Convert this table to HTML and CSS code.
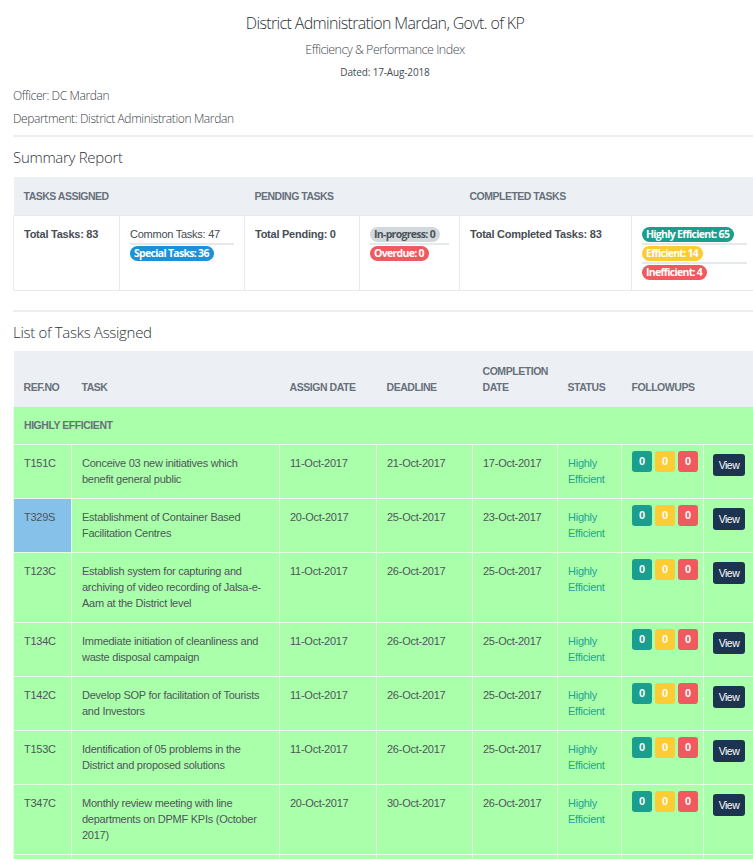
FILE: index.html
```html
<!DOCTYPE html>
<html lang="en">
<head>
<meta charset="utf-8">
<title>Efficiency &amp; Performance Index</title>
<link rel="stylesheet" href="styles.css">
</head>
<body>
<div class="page">
  <header class="report-head">
    <h1 class="title">District Administration Mardan, Govt. of KP</h1>
    <p class="subtitle">Efficiency &amp; Performance Index</p>
    <p class="dated">Dated: 17-Aug-2018</p>
  </header>
  <div class="meta">
    <p class="meta-line">Officer: DC Mardan</p>
    <p class="meta-line">Department: District Administration Mardan</p>
  </div>
  <hr class="rule">
  <h2 class="section-title section-title-first">Summary Report</h2>
  <table class="summary">
    <colgroup>
      <col class="s1"><col class="s2"><col class="s3"><col class="s4"><col class="s5"><col class="s6">
    </colgroup>
    <thead>
      <tr>
        <th colspan="2">Tasks Assigned</th>
        <th colspan="2">Pending Tasks</th>
        <th colspan="2">Completed Tasks</th>
      </tr>
    </thead>
    <tbody>
      <tr>
        <td class="strong">Total Tasks: 83</td>
        <td>
          <ul class="stack">
            <li>Common Tasks: 47</li>
            <li><span class="pill pill-blue">Special Tasks: 36</span></li>
          </ul>
        </td>
        <td class="strong">Total Pending: 0</td>
        <td>
          <ul class="stack">
            <li><span class="pill pill-gray">In-progress: 0</span></li>
            <li><span class="pill pill-red">Overdue: 0</span></li>
          </ul>
        </td>
        <td class="strong">Total Completed Tasks: 83</td>
        <td>
          <ul class="stack">
            <li><span class="pill pill-teal">Highly Efficient: 65</span></li>
            <li><span class="pill pill-yellow">Efficient: 14</span></li>
            <li><span class="pill pill-red">Inefficient: 4</span></li>
          </ul>
        </td>
      </tr>
    </tbody>
  </table>
  <hr class="rule rule-2">
  <h2 class="section-title">List of Tasks Assigned</h2>
  <table class="tasks">
    <colgroup>
      <col class="c1"><col class="c2"><col class="c3"><col class="c4"><col class="c5"><col class="c6"><col class="c7"><col class="c8">
    </colgroup>
    <thead>
      <tr>
        <th>Ref.No</th>
        <th>Task</th>
        <th>Assign Date</th>
        <th>Deadline</th>
        <th>Completion Date</th>
        <th>Status</th>
        <th>Followups</th>
        <th></th>
      </tr>
    </thead>
    <tbody>
      <tr class="group"><td colspan="8">Highly Efficient</td></tr>
      <tr>
        <td>T151C</td>
        <td>Conceive 03 new initiatives which benefit general public</td>
        <td>11-Oct-2017</td><td>21-Oct-2017</td><td>17-Oct-2017</td>
        <td class="status">Highly Efficient</td>
        <td class="follow"><span class="fb fb-teal">0</span><span class="fb fb-yellow">0</span><span class="fb fb-red">0</span></td>
        <td class="act"><button class="view">View</button></td>
      </tr>
      <tr>
        <td class="special">T329S</td>
        <td>Establishment of Container Based Facilitation Centres</td>
        <td>20-Oct-2017</td><td>25-Oct-2017</td><td>23-Oct-2017</td>
        <td class="status">Highly Efficient</td>
        <td class="follow"><span class="fb fb-teal">0</span><span class="fb fb-yellow">0</span><span class="fb fb-red">0</span></td>
        <td class="act"><button class="view">View</button></td>
      </tr>
      <tr>
        <td>T123C</td>
        <td>Establish system for capturing and archiving of video recording of Jalsa-e-Aam at the District level</td>
        <td>11-Oct-2017</td><td>26-Oct-2017</td><td>25-Oct-2017</td>
        <td class="status">Highly Efficient</td>
        <td class="follow"><span class="fb fb-teal">0</span><span class="fb fb-yellow">0</span><span class="fb fb-red">0</span></td>
        <td class="act"><button class="view">View</button></td>
      </tr>
      <tr>
        <td>T134C</td>
        <td>Immediate initiation of cleanliness and waste disposal campaign</td>
        <td>11-Oct-2017</td><td>26-Oct-2017</td><td>25-Oct-2017</td>
        <td class="status">Highly Efficient</td>
        <td class="follow"><span class="fb fb-teal">0</span><span class="fb fb-yellow">0</span><span class="fb fb-red">0</span></td>
        <td class="act"><button class="view">View</button></td>
      </tr>
      <tr>
        <td>T142C</td>
        <td>Develop SOP for facilitation of Tourists and Investors</td>
        <td>11-Oct-2017</td><td>26-Oct-2017</td><td>25-Oct-2017</td>
        <td class="status">Highly Efficient</td>
        <td class="follow"><span class="fb fb-teal">0</span><span class="fb fb-yellow">0</span><span class="fb fb-red">0</span></td>
        <td class="act"><button class="view">View</button></td>
      </tr>
      <tr>
        <td>T153C</td>
        <td>Identification of 05 problems in the District and proposed solutions</td>
        <td>11-Oct-2017</td><td>26-Oct-2017</td><td>25-Oct-2017</td>
        <td class="status">Highly Efficient</td>
        <td class="follow"><span class="fb fb-teal">0</span><span class="fb fb-yellow">0</span><span class="fb fb-red">0</span></td>
        <td class="act"><button class="view">View</button></td>
      </tr>
      <tr>
        <td>T347C</td>
        <td>Monthly review meeting with line departments on DPMF KPIs (October 2017)</td>
        <td>20-Oct-2017</td><td>30-Oct-2017</td><td>26-Oct-2017</td>
        <td class="status">Highly Efficient</td>
        <td class="follow"><span class="fb fb-teal">0</span><span class="fb fb-yellow">0</span><span class="fb fb-red">0</span></td>
        <td class="act"><button class="view">View</button></td>
      </tr>
      <tr class="filler">
        <td></td><td></td><td></td><td></td><td></td><td></td><td></td><td></td>
      </tr>
    </tbody>
  </table>
</div>
</body>
</html>
```

FILE: styles.css
```css
html, body {
  margin: 0;
  padding: 0;
  background: #ffffff;
}

body {
  font-family: "Open Sans", "Liberation Sans", sans-serif;
  color: #444b52;
}

.page {
  width: 744px;
  padding: 0 13px 40px;
}

.report-head {
  text-align: center;
  padding-top: 12px;
}

.title {
  margin: 0;
  font-weight: 300;
  font-size: 16px;
  letter-spacing: -0.65px;
  line-height: 22px;
  color: #2d3339;
}

.subtitle {
  margin: 6px 0 0;
  font-weight: 300;
  font-size: 12.5px;
  letter-spacing: -0.5px;
  line-height: 20px;
  color: #444b52;
}

.dated {
  margin: 3px 0 0;
  font-weight: 400;
  font-size: 10px;
  letter-spacing: -0.15px;
  line-height: 18px;
  color: #444b52;
}

.meta {
  margin-top: 3px;
}

.meta-line {
  margin: 0;
  font-weight: 300;
  font-size: 12px;
  letter-spacing: -0.38px;
  line-height: 23px;
  color: #3a4047;
}

.rule {
  border: 0;
  border-top: 2px solid #eceef1;
  margin: 5px 0 8px;
}

.rule-2 {
  margin: 19px 0 8px;
}

.section-title {
  margin: 0 0 7px;
  font-weight: 300;
  font-size: 15px;
  letter-spacing: -0.3px;
  line-height: 24px;
  color: #2d3339;
}

.section-title-first {
  margin-bottom: 8px;
}

/* Summary table */
.summary {
  width: 744px;
  border-collapse: collapse;
  table-layout: fixed;
  font-family: "Liberation Sans", Arial, sans-serif;
}

.s1 { width: 106px; }
.s2 { width: 125px; }
.s3 { width: 115px; }
.s4 { width: 100px; }
.s5 { width: 172px; }
.s6 { width: 126px; }

.summary th {
  background: #eceff3;
  text-align: left;
  text-transform: uppercase;
  font-size: 10.5px;
  letter-spacing: -0.5px;
  font-weight: 700;
  color: #68717b;
  height: 38px;
  padding: 0 10px;
  box-sizing: border-box;
}

.summary td {
  border: 1px solid #e8ebee;
  vertical-align: top;
  padding: 11px 10px 10px;
  height: 75px;
  box-sizing: border-box;
  font-size: 11px;
  letter-spacing: -0.25px;
  line-height: 15px;
  color: #444b52;
}

.summary td.strong {
  font-weight: 700;
  color: #474e55;
}

.stack {
  list-style: none;
  margin: 0;
  padding: 0;
}

.stack li {
  border-bottom: 2px solid #e6e9ec;
  padding-bottom: 1px;
  margin-bottom: 1px;
  line-height: 15px;
}

.stack li:last-child {
  border-bottom: 0;
  padding-bottom: 0;
  margin-bottom: 0;
}

.pill {
  display: inline-block;
  font-family: "Open Sans", sans-serif;
  font-weight: 700;
  font-size: 10.5px;
  letter-spacing: -0.7px;
  line-height: 15px;
  padding: 0 5px 0 4px;
  border-radius: 8px;
  color: #ffffff;
}

.pill-blue { background: #1e90d6; }
.pill-gray { background: #d3d8dc; color: #4b535a; }
.pill-red { background: #f05a5f; }
.pill-teal { background: #1a9e8d; }
.pill-yellow { background: #fdcb33; }

/* Task table */
.tasks {
  width: 744px;
  border-collapse: collapse;
  table-layout: fixed;
  font-family: "Liberation Sans", Arial, sans-serif;
  font-size: 11px;
  letter-spacing: -0.25px;
  color: #4e555b;
}

.c1 { width: 58px; }
.c2 { width: 208px; }
.c3 { width: 97px; }
.c4 { width: 96px; }
.c5 { width: 85px; }
.c6 { width: 64px; }
.c7 { width: 82px; }
.c8 { width: 54px; }

.tasks th {
  background: #eceff3;
  text-align: left;
  vertical-align: bottom;
  text-transform: uppercase;
  font-size: 10.5px;
  letter-spacing: -0.45px;
  font-weight: 700;
  color: #68717b;
  line-height: 16px;
  height: 56px;
  padding: 0 10px 12px;
  box-sizing: border-box;
}

.tasks td {
  background: #aaffaa;
  border: 1px solid #e6fbe6;
  vertical-align: top;
  padding: 10px 10px 11px;
  line-height: 16px;
}

.tasks tr.group td {
  font-size: 10.5px;
  letter-spacing: -0.45px;
  font-weight: 700;
  text-transform: uppercase;
  color: #68717b;
  height: 38px;
  padding: 0 10px;
  vertical-align: middle;
  box-sizing: border-box;
  border-top: 0;
}

.tasks tr.filler td {
  height: 40px;
  padding: 0;
}

.tasks td.special {
  background: #85c1e9;
}

.tasks td.status {
  color: #22a394;
}

.tasks td.follow {
  padding: 6px 6px 6px 10px;
  white-space: nowrap;
}

.fb {
  display: inline-block;
  width: 20px;
  height: 21px;
  line-height: 21px;
  text-align: center;
  border-radius: 3px;
  color: #ffffff;
  font-weight: 700;
  font-size: 11px;
  letter-spacing: 0;
  margin-right: 3px;
}

.fb-teal { background: #1a9e8d; }
.fb-yellow { background: #fdcb33; }
.fb-red { background: #f05a5f; }

.tasks td.act {
  padding: 9px 6px 9px 9px;
}

.view {
  display: block;
  width: 32px;
  height: 22px;
  padding: 0;
  border: 0;
  border-radius: 3px;
  background: #1d3450;
  color: #ffffff;
  font-family: "Liberation Sans", Arial, sans-serif;
  font-size: 10.5px;
  letter-spacing: -0.5px;
  cursor: pointer;
}
```
